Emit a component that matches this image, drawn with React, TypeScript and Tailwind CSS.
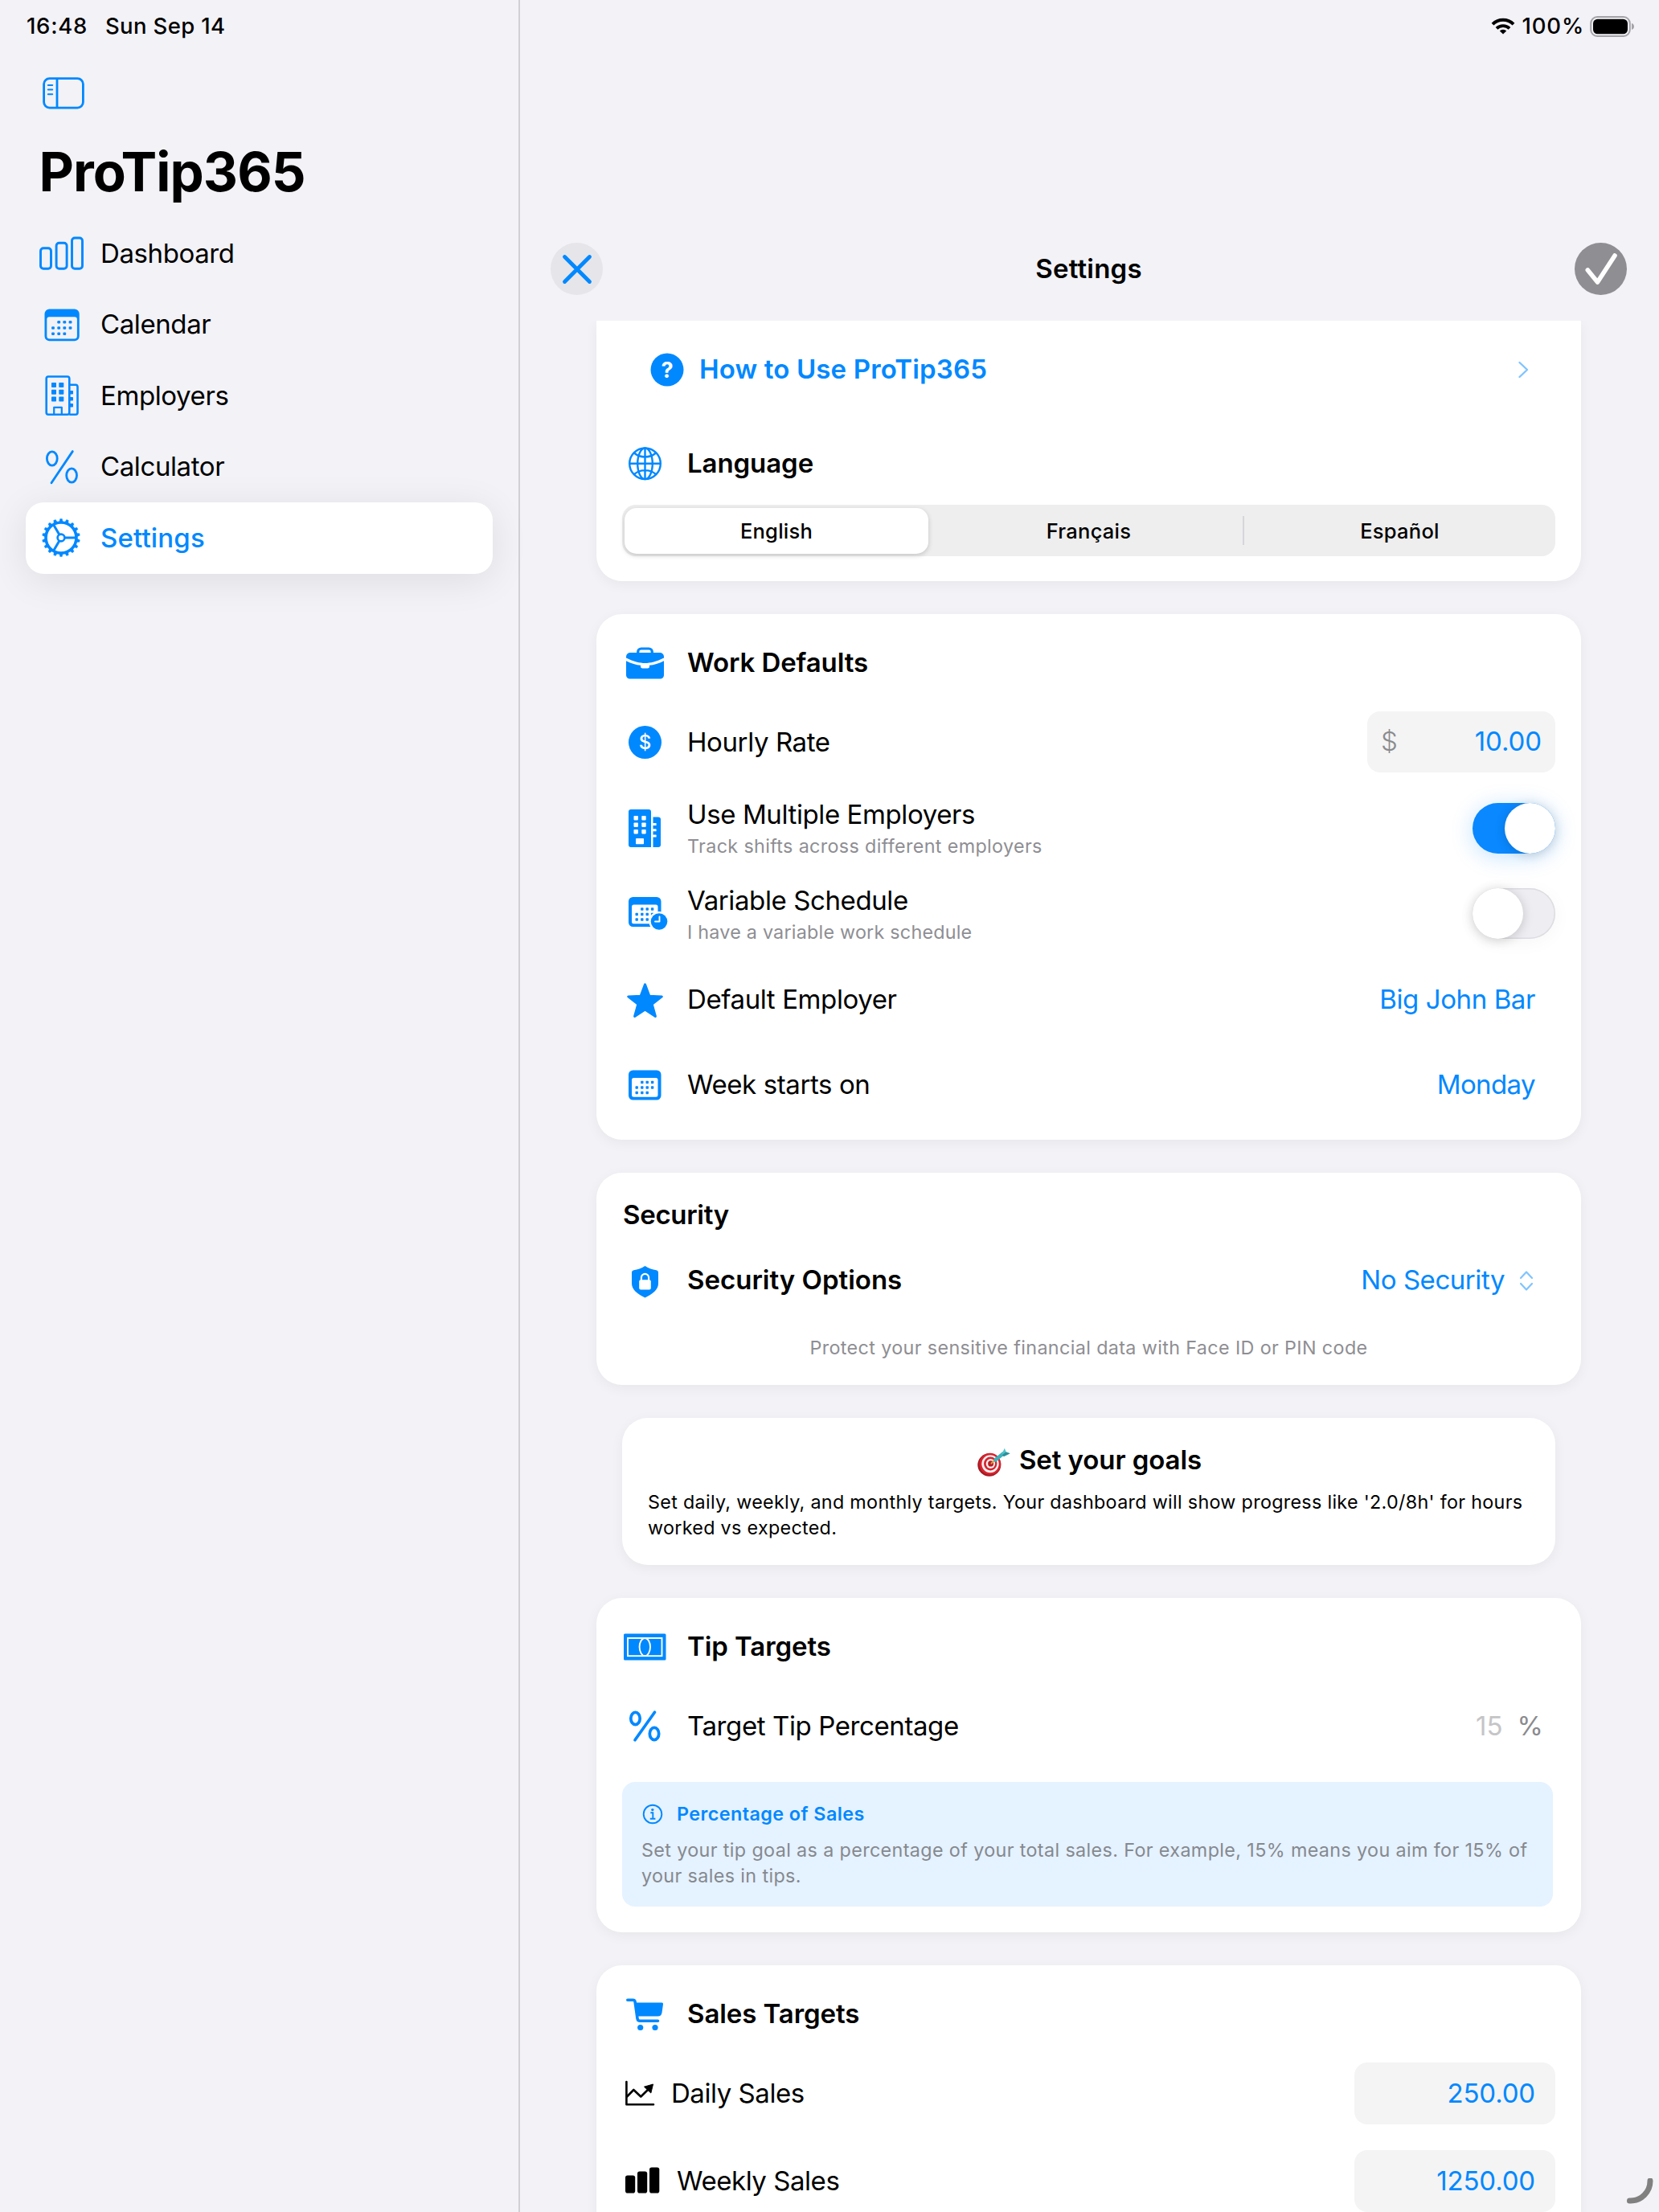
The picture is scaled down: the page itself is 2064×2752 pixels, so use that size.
import type { ReactNode } from "react";

const BLUE = "#0088ff";

/* ---------- shared pieces ---------- */

function Glyph({ children, className = "" }: { children: ReactNode; className?: string }) {
  return (
    <svg viewBox="0 0 57 57" className={`size-[57px] shrink-0 overflow-visible ${className}`} fill={BLUE}>
      {children}
    </svg>
  );
}

function Card({ children, className }: { children: ReactNode; className: string }) {
  return (
    <section className={`shrink-0 bg-white px-8 shadow-[0_4px_16px_rgba(0,0,0,0.05)] ${className}`}>{children}</section>
  );
}

function Heading({ icon, children }: { icon: ReactNode; children: ReactNode }) {
  return (
    <div className="flex h-[121px] items-center gap-6">
      {icon}
      <h2 className="text-[33px] leading-[41px] font-semibold tracking-[-0.08px]">{children}</h2>
    </div>
  );
}

function Row({ icon, title, note, noteClass = "", children, className = "h-[106px]" }: {
  icon: ReactNode;
  title: string;
  note?: string;
  noteClass?: string;
  children: ReactNode;
  className?: string;
}) {
  return (
    <div className={`flex items-center gap-6 ${className}`}>
      {icon}
      <div className="grow">
        <div className="text-[33px] leading-[46px] tracking-[-0.4px]">{title}</div>
        {note && <div className={`text-[23.3px] leading-[34px] text-[#8e8e93] ${noteClass}`}>{note}</div>}
      </div>
      {children}
    </div>
  );
}

/* ---------- icons ---------- */

function CalendarBody({ top }: { top: number }) {
  const dots = [
    [24.8, 15], [31.2, 15], [37.6, 15],
    [18.2, 21.5], [24.8, 21.5], [31.2, 21.5], [37.6, 21.5],
    [18.2, 28], [24.8, 28], [31.2, 28],
  ];
  return (
    <g transform={`translate(0 ${top})`}>
      <path fillRule="evenodd" d="M13.5 0H43a5.5 5.5 0 0 1 5.5 5.5v26a5.5 5.5 0 0 1-5.5 5.5H13.5A5.5 5.5 0 0 1 8 31.5v-26A5.5 5.5 0 0 1 13.5 0ZM14.5 9.5a2.5 2.5 0 0 0-2.5 2.5v18.700a2.500 2.500 0 0 0 2.500 2.500H42a2.500 2.500 0 0 0 2.500-2.500V12a2.500 2.500 0 0 0-2.500-2.500Z" />
      {dots.map(([x, y]) => (
        <rect key={`${x}-${y}`} x={x - 1.7} y={y - 1.7} width="3.4" height="3.4" rx="0.8" />
      ))}
    </g>
  );
}

const SidebarToggle = () => (
  <svg viewBox="0 0 52 40" className="h-10 w-[52px]" fill="none" stroke={BLUE} strokeWidth="2.8">
    <rect x="1.6" y="1.6" width="48.8" height="36.5" rx="7" />
    <path d="M18 1.6V38" />
    <path d="M6.8 10h5.4M6.8 15.6h5.4M6.8 21.3h5.4" strokeWidth="2" strokeLinecap="round" />
  </svg>
);

const DashboardIcon = () => (
  <svg viewBox="0 0 64 64" className="size-16" fill="none" stroke={BLUE} strokeWidth="2.9">
    <rect x="6.5" y="25.8" width="13" height="25.5" rx="3.5" />
    <rect x="26.1" y="19.3" width="13" height="32" rx="3.5" />
    <rect x="45.5" y="13" width="13" height="38.3" rx="3.5" />
  </svg>
);

const NavCalendarIcon = () => {
  const dots = [
    [29.2, 28.7], [36.3, 28.7], [43.5, 28.7],
    [22, 36], [29.2, 36], [36.3, 36], [43.5, 36],
    [22, 43.2], [29.2, 43.2], [36.3, 43.2],
  ];
  return (
    <svg viewBox="0 0 64 64" className="size-16" fill={BLUE}>
      <path fillRule="evenodd" d="M17.5 12.5h31.200a6 6 0 0 1 6 6v27.700a6 6 0 0 1-6 6H17.500a6 6 0 0 1-6-6V18.500a6 6 0 0 1 6-6ZM17.300 22.300a3 3 0 0 0-3 3v20.600a3.500 3.500 0 0 0 3.500 3.500h30.600a3.500 3.500 0 0 0 3.500-3.500V25.300a3 3 0 0 0-3-3Z" />
      {dots.map(([x, y]) => (
        <rect key={`${x}-${y}`} x={x - 1.9} y={y - 1.7} width="3.8" height="3.4" rx="1.2" />
      ))}
    </svg>
  );
};

const EmployersIcon = () => (
  <svg viewBox="0 0 64 64" className="size-16" fill={BLUE}>
    <g fill="none" stroke={BLUE} strokeWidth="2.6">
      <rect x="13.7" y="8.5" width="28.6" height="47.3" rx="2.5" />
      <path d="M42.3 18.800h7.700a2.500 2.500 0 0 1 2.500 2.500v32a2.500 2.500 0 0 1-2.500 2.500h-7.700" />
      <path d="M23.2 55.800V46.800h9.600v9" strokeWidth="2.2" strokeLinejoin="round" />
    </g>
    {[16, 24.8, 33.6].map((y) => (
      <g key={y}>
        <rect x="20" y={y} width="6" height="6" rx="0.8" />
        <rect x="29.300" y={y} width="6" height="6" rx="0.8" />
      </g>
    ))}
    {[26, 34, 42].map((y) => (
      <rect key={y} x="42.3" y={y} width="4.7" height="4.6" rx="0.8" />
    ))}
  </svg>
);

const NavPercentIcon = () => (
  <svg viewBox="0 0 64 64" className="size-16" fill="none" stroke={BLUE} strokeWidth="2.8" strokeLinecap="round">
    <ellipse cx="20.8" cy="21.5" rx="6.4" ry="8.7" />
    <ellipse cx="45.1" cy="42.5" rx="6.4" ry="8.7" />
    <path d="M46.3 12.600 20 51.800" />
  </svg>
);

const GearIcon = () => (
  <svg viewBox="0 0 64 64" className="size-16" fill="none" stroke={BLUE}>
    <circle cx="32" cy="32" r="19" strokeWidth="3.6" />
    <circle cx="32" cy="32" r="4.4" strokeWidth="2.6" />
    {Array.from({ length: 18 }, (_, i) => (
      <path key={i} d="M50.5 29.6 55.400 30.700V33.300L50.500 34.400Z" fill={BLUE} strokeWidth="0.4" strokeLinejoin="round" transform={`rotate(${i * 20 + 10} 32 32)`} />
    ))}
    {[0, 120, 240].map((a) => (
      <path key={a} d="M36.5 32H50" strokeWidth="3" transform={`rotate(${a} 32 32)`} />
    ))}
  </svg>
);

const GlobeIcon = () => (
  <Glyph>
    <g fill="none" stroke={BLUE} strokeWidth="2.4">
      <circle cx="28.5" cy="28.8" r="19.3" />
      <ellipse cx="28.5" cy="28.8" rx="9.3" ry="19.3" />
      <path d="M28.5 9.500v38.600M9.200 28.800h38.600M15 15.500c7.500 6.600 19.500 6.600 27 0M15 42.100c7.500-6.600 19.500-6.600 27 0" />
    </g>
  </Glyph>
);

const BriefcaseIcon = () => (
  <Glyph>
    <path d="M5 22.500V21a5 5 0 0 1 5-5h37a5 5 0 0 1 5 5v1.500C43 27 35 29 28.500 29S14 27 5 22.500Z" />
    <path d="M5 26.200c6.500 3.300 12.500 5 18 5.600v1.500a2.300 2.300 0 0 0 2.300 2.300h6.400a2.300 2.300 0 0 0 2.300-2.300v-1.500c5.500-.6 11.500-2.300 18-5.600V44a4.500 4.500 0 0 1-4.500 4.500h-38A4.500 4.500 0 0 1 5 44Z" />
    <path d="M19.700 17v-2a4 4 0 0 1 4-4h9.600a4 4 0 0 1 4 4v2" fill="none" stroke={BLUE} strokeWidth="3.2" />
  </Glyph>
);

const DollarIcon = () => (
  <Glyph>
    <circle cx="28.5" cy="28.5" r="20.5" />
    <text x="28.5" y="37" fill="white" fontSize="24" fontWeight="500" textAnchor="middle">$</text>
  </Glyph>
);

const BuildingsIcon = () => (
  <Glyph>
    <path d="M11 5h22a3 3 0 0 1 3 3v44H11a3 3 0 0 1-3-3V8a3 3 0 0 1 3-3ZM38.500 14.500H45a3 3 0 0 1 3 3V49a3 3 0 0 1-3 3h-6.500Z" />
    <g fill="white">
      {[13, 21.5, 30].map((y) => (
        <g key={y}>
          <rect x="14.5" y={y} width="5.4" height="5.4" rx="0.8" />
          <rect x="24.3" y={y} width="5.4" height="5.4" rx="0.8" />
        </g>
      ))}
      <rect x="17" y="41" width="10" height="7.2" rx="0.8" />
      {[22, 29.3, 36.6].map((y) => (
        <rect key={y} x="38" y={y} width="4.6" height="3" rx="0.6" />
      ))}
    </g>
  </Glyph>
);

const CalendarClockIcon = () => (
  <Glyph>
    <CalendarBody top={8} />
    <circle cx="46" cy="38.5" r="12.6" fill="white" />
    <circle cx="46" cy="38.5" r="10.3" />
    <path d="M46.5 32.500v6h-5.500" fill="none" stroke="white" strokeWidth="1.9" strokeLinecap="round" strokeLinejoin="round" />
  </Glyph>
);

const StarIcon = () => (
  <Glyph>
    <path
      d="M28.5 9.800 33.900 24.300 49.300 24.900 37.200 34.300 41.400 49.500 28.500 41 15.600 49.500 19.800 34.300 7.700 24.900 23.100 24.300Z"
      stroke={BLUE}
      strokeWidth="3"
      strokeLinejoin="round"
    />
  </Glyph>
);

const CalendarIcon = () => (
  <Glyph>
    <CalendarBody top={10.5} />
  </Glyph>
);

const ShieldIcon = () => (
  <Glyph>
    <path d="M28.5 10c4.500 3 9 4.300 14 5.300 1.700.4 2.500 1.500 2.500 3.200v13.500c0 7.500-7.500 13-16.500 17.500-9-4.500-16.500-10-16.500-17.500V18.500c0-1.700.8-2.800 2.500-3.200 5-1 9.500-2.300 14-5.300Z" />
    <rect x="21.2" y="27.3" width="14.6" height="12.2" rx="2" fill="white" />
    <path d="M23.9 28v-3.500a4.600 4.600 0 0 1 9.200 0V28" fill="none" stroke="white" strokeWidth="2.2" />
  </Glyph>
);

const BanknoteIcon = () => (
  <Glyph>
    <rect x="2" y="12.5" width="52.5" height="33" rx="1.5" />
    <g fill="none" stroke="white" strokeWidth="1.9">
      <rect x="7" y="18" width="42.5" height="22.2" />
      <ellipse cx="28.3" cy="29.1" rx="6.7" ry="11" />
    </g>
  </Glyph>
);

const PercentIcon = () => (
  <Glyph>
    <g fill="none" stroke={BLUE} strokeWidth="3.700" strokeLinecap="round">
      <ellipse cx="16.5" cy="19" rx="5.700" ry="7.600" />
      <ellipse cx="40" cy="38" rx="5.700" ry="7.600" />
      <path d="M40.5 11.300 16 45.700" />
    </g>
  </Glyph>
);

const CartIcon = () => (
  <Glyph>
    <path d="M6.8 11.300h6.700q2.300 0 2.600 2.300l2.900 20.600q.5 3.100 3.300 3.100H44.500" fill="none" stroke={BLUE} strokeWidth="3.6" strokeLinecap="round" />
    <path d="M15.5 14.500H49.500q1.800 0 1.500 2l-1.500 10.500q-.7 4.500-5 4.500H18Z" />
    <circle cx="22.7" cy="45.5" r="3.6" />
    <circle cx="41" cy="45.5" r="3.6" />
  </Glyph>
);

const TrendIcon = () => (
  <Glyph>
    <g fill="none" stroke="black" strokeWidth="2.6" strokeLinecap="round" strokeLinejoin="round">
      <path d="M5.4 14v28.300H39" />
      <path d="M6 32.500 14.300 24l9 8.500L34 22" />
    </g>
    <path d="M38.5 17 27.500 20.200 35.800 28Z" fill="black" stroke="black" strokeLinejoin="round" />
  </Glyph>
);

const BarsIcon = () => (
  <Glyph>
    <g fill="black">
      <rect x="4" y="21.5" width="12.2" height="22" rx="2.8" />
      <rect x="19" y="16.5" width="12.2" height="27" rx="2.8" />
      <rect x="34" y="11.5" width="12.3" height="32" rx="2.8" />
    </g>
  </Glyph>
);

const TargetIcon = () => (
  <svg viewBox="0 0 41 36" className="h-9 w-[41px]">
    <ellipse cx="14.8" cy="21.5" rx="14.5" ry="14.3" fill="#a31a22" />
    <ellipse cx="15.8" cy="20.3" rx="13.4" ry="13.5" fill="#d8232e" />
    <ellipse cx="16" cy="20.2" rx="10.7" ry="11" fill="#f4f1f1" />
    <ellipse cx="16.2" cy="20.1" rx="8.2" ry="8.5" fill="#d8232e" />
    <ellipse cx="16.4" cy="20" rx="5.7" ry="5.9" fill="#f4f1f1" />
    <ellipse cx="16.6" cy="19.9" rx="3.5" ry="3.7" fill="#b81d26" />
    <path d="M17.5 19.500 23.500 14" stroke="#d9a441" strokeWidth="2" strokeLinecap="round" />
    <path d="M22.5 15.300 32 7.500" stroke="#3bb3bd" strokeWidth="4.5" strokeLinecap="round" />
    <path d="M30 9 33.800.8 35.600 5.300 40.600 7.300 33 11Z" fill="#4fc3cb" />
    <path d="M30.5 9.300 35.500 5.400 40.600 7.300 33 11Z" fill="#2e8f9b" />
  </svg>
);

/* ---------- sidebar ---------- */

const nav = [
  { label: "Dashboard", icon: <DashboardIcon /> },
  { label: "Calendar", icon: <NavCalendarIcon /> },
  { label: "Employers", icon: <EmployersIcon /> },
  { label: "Calculator", icon: <NavPercentIcon /> },
  { label: "Settings", icon: <GearIcon />, active: true },
];

function Sidebar() {
  return (
    <aside className="flex w-[647px] shrink-0 flex-col border-r-2 border-[#d0d0d5]">
      <div className="flex h-[65px] items-center gap-[22px] pl-[33px] text-[27.5px] font-medium tracking-[0.35px]">
        <span className="tracking-[0.7px]">16:48</span>
        <span>Sun Sep 14</span>
      </div>
      <div className="mt-[31px] pl-[53px]">
        <SidebarToggle />
      </div>
      <h1 className="mt-[33px] pl-[48.5px] text-[67px] leading-[90px] font-bold tracking-[-0.95px]">ProTip365</h1>
      <nav className="mt-3 pr-[32px] pl-8">
        {nav.map(({ label, icon, active }) => (
          <div
            key={label}
            className={
              active
                ? "flex h-[88.5px] items-center gap-[17px] rounded-[22px] bg-white pl-3 text-[33px] font-medium tracking-[0.15px] text-[#0088ff] shadow-[0_8px_48px_rgba(0,0,0,0.09)]"
                : "flex h-[88.5px] items-center gap-[17px] pl-3 text-[33px] tracking-[-0.4px]"
            }
          >
            {icon}
            <span>{label}</span>
          </div>
        ))}
      </nav>
    </aside>
  );
}

/* ---------- top bars ---------- */

function StatusRight() {
  return (
    <div className="flex h-[65px] shrink-0 items-center justify-end pr-[30px]">
      <svg viewBox="0 0 30 21" className="mr-[9px] h-[21px] w-[30px]" fill="none" stroke="black">
        <path d="M2 8.200a18.500 18.500 0 0 1 26 0" strokeWidth="4" />
        <path d="M7 13.300a11.500 11.500 0 0 1 16 0" strokeWidth="3.8" />
        <path d="M15 20.500 10.800 16.400a6 6 0 0 1 8.400 0Z" fill="black" stroke="none" />
      </svg>
      <span className="text-[27.5px] font-medium tracking-[0.8px]">100%</span>
      <svg viewBox="0 0 56 28" className="ml-[7px] h-7 w-14">
        <rect x="1.2" y="2" width="48.6" height="24" rx="8" fill="none" stroke="#a3a3a8" strokeWidth="2" />
        <rect x="4" y="4.7" width="43" height="18.6" rx="5.5" fill="black" />
        <path d="M52 10c2 .6 3 2.200 3 4s-1 3.400-3 4Z" fill="#a3a3a8" />
      </svg>
    </div>
  );
}

function TitleBar() {
  return (
    <header className="mt-[237px] flex h-[65px] shrink-0 items-center justify-between pr-10 pl-[38px]">
      <button className="flex size-[65px] items-center justify-center rounded-full bg-[#e5e5ea]">
        <svg viewBox="0 0 40 40" className="size-10" stroke={BLUE} strokeWidth="4.8" strokeLinecap="round">
          <path d="M4.5 4.500 35.500 35.500M35.500 4.500 4.500 35.500" />
        </svg>
      </button>
      <h2 className="text-[33px] font-semibold tracking-[0.2px]">Settings</h2>
      <button className="flex size-[65px] items-center justify-center rounded-full bg-[#8e8e93]">
        <svg viewBox="0 0 65 65" className="size-[65px]" fill="none" stroke="white" strokeWidth="5.6" strokeLinecap="round" strokeLinejoin="round">
          <path d="M16.3 34 28.500 49 50 16" />
        </svg>
      </button>
    </header>
  );
}

/* ---------- cards ---------- */

function LanguageCard() {
  return (
    <Card className="h-[324px] rounded-b-[32px]">
      <div className="flex h-[122px] items-center pr-[32px] pl-[33px]">
        <svg viewBox="0 0 46 46" className="size-[46px]">
          <circle cx="23" cy="23" r="20.5" fill={BLUE} />
          <text x="23" y="32.8" fill="white" fontSize="27" fontWeight="700" textAnchor="middle">?</text>
        </svg>
        <span className="ml-[17px] grow text-[33px] font-semibold tracking-[0.14px] text-[#0088ff]">How to Use ProTip365</span>
        <svg viewBox="0 0 16 24" className="h-6 w-4" fill="none" stroke="#80c4ff" strokeWidth="2.4" strokeLinecap="round" strokeLinejoin="round">
          <path d="M3.5 3 13 12l-9.500 9" />
        </svg>
      </div>
      <div className="mt-6 flex h-[63px] items-center gap-6">
        <GlobeIcon />
        <h2 className="text-[33px] font-semibold tracking-[-0.08px]">Language</h2>
      </div>
      <div className="mt-5 flex h-16 items-center rounded-[17px] bg-[#eeeeef] text-[25.5px] leading-[33px] font-medium tracking-[0.25px]">
        <div className="ml-[3px] flex h-[57px] w-[378px] items-center justify-center rounded-[15px] bg-white shadow-[0_2px_6px_rgba(0,0,0,0.18)]">
          <span className="pt-px">English</span>
        </div>
        <div className="grow pt-px pl-2 text-center">Français</div>
        <div className="h-9 w-0.5 bg-[#d6d6d8]" />
        <div className="w-[387px] pt-px text-center">Español</div>
      </div>
    </Card>
  );
}

function WorkCard() {
  return (
    <Card className="h-[654px] rounded-[32px]">
      <Heading icon={<BriefcaseIcon />}>Work Defaults</Heading>
      <Row icon={<DollarIcon />} title="Hourly Rate" className="h-[76px]">
        <div className="flex h-[76px] w-[234px] items-center justify-between rounded-[16px] bg-[#f4f4f4] px-[17px] text-[33px] tracking-[-0.1px]">
          <span className="font-light text-[#8a8a8e]">$</span>
          <span className="text-[#0088ff]">10.00</span>
        </div>
      </Row>
      <Row
        icon={<BuildingsIcon />}
        title="Use Multiple Employers"
        note="Track shifts across different employers"
        noteClass="tracking-[0.36px]"
        className="mt-4 h-[106px]"
      >
        <div className="flex h-[63px] w-[103px] justify-end rounded-full bg-[#0a88ff] shadow-[0_4px_28px_rgba(0,136,255,0.24)]">
          <div className="size-[63px] rounded-full bg-white shadow-[0_2px_14px_rgba(0,0,0,0.16)]" />
        </div>
      </Row>
      <Row
        icon={<CalendarClockIcon />}
        title="Variable Schedule"
        note="I have a variable work schedule"
        noteClass="tracking-[0.24px]"
        className="h-[107px]"
      >
        <div className="flex h-[63px] w-[103px] rounded-full bg-[#ededf2] shadow-[inset_0_0_0_1.5px_#dcdce1,0_4px_24px_rgba(0,0,0,0.04)]">
          <div className="size-[63px] rounded-full bg-white shadow-[0_2px_14px_rgba(0,0,0,0.18)]" />
        </div>
      </Row>
      <Row icon={<StarIcon />} title="Default Employer">
        <span className="pr-[25px] text-[33px] leading-[46px] tracking-[-0.4px] text-[#0088ff]">Big John Bar</span>
      </Row>
      <Row icon={<CalendarIcon />} title="Week starts on">
        <span className="pr-[25px] text-[33px] leading-[46px] tracking-[-0.6px] text-[#0088ff]">Monday</span>
      </Row>
    </Card>
  );
}

function SecurityCard() {
  return (
    <Card className="h-[264px] rounded-[32px] pt-8">
      <h2 className="pl-px text-[33px] leading-10 font-semibold tracking-[-0.3px]">Security</h2>
      <div className="mt-[24px] flex h-[76px] items-center gap-6">
        <ShieldIcon />
        <span className="grow text-[33px] font-semibold">Security Options</span>
        <span className="text-[33px] tracking-[-0.45px] text-[#0088ff]">No Security</span>
        <svg viewBox="0 0 20 28" className="mr-[26px] -ml-[7px] h-7 w-5" fill="none" stroke="#80c4ff" strokeWidth="2.2" strokeLinecap="round" strokeLinejoin="round">
          <path d="M3 11 10 3.500 17 11M3 18l7 7.500 7-7.500" />
        </svg>
      </div>
      <p className="mt-[30px] text-center text-[23.3px] leading-8 tracking-[0.38px] text-[#8e8e93]">
        Protect your sensitive financial data with Face ID or PIN code
      </p>
    </Card>
  );
}

function GoalsCard() {
  return (
    <Card className="mx-8 h-[183px] rounded-[32px] pt-8">
      <div className="flex h-[41px] items-center justify-center gap-[11px] pl-0.5">
        <div className="pt-1">
          <TargetIcon />
        </div>
        <h2 className="text-[33px] font-semibold tracking-[-0.08px]">Set your goals</h2>
      </div>
      <p className="mt-4 text-[23.3px] leading-[32.4px] tracking-[0.315px] whitespace-nowrap">
        Set daily, weekly, and monthly targets. Your dashboard will show progress like '2.0/8h' for hours
        <br />
        worked vs expected.
      </p>
    </Card>
  );
}

function TipCard() {
  return (
    <Card className="h-[416px] rounded-[32px]">
      <Heading icon={<BanknoteIcon />}>Tip Targets</Heading>
      <Row icon={<PercentIcon />} title="Target Tip Percentage" className="h-[76px]">
        <div className="flex items-center gap-[18px] pr-[15px] text-[33px] leading-[46px]">
          <span className="text-[#c5c5c7]">15</span>
          <span className="text-[#8a8a8e]">%</span>
        </div>
      </Row>
      <div className="mt-8 mr-[3px] h-[155px] rounded-[16px] bg-[#e5f2ff] px-6 pt-6">
        <div className="flex h-8 items-center gap-[17px] pl-px">
          <svg viewBox="0 0 26 26" className="size-[26px]" fill="none" stroke={BLUE} strokeWidth="1.9">
            <circle cx="13" cy="13" r="11.3" />
            <circle cx="12.8" cy="7.6" r="1.7" fill={BLUE} stroke="none" />
            <path d="M10.3 11.300h3v7.200M9.800 18.800h6.600" />
          </svg>
          <span className="text-[23.3px] font-semibold tracking-[0.45px] text-[#0088ff]">Percentage of Sales</span>
        </div>
        <p className="mt-[12.5px] text-[23.3px] leading-[32.4px] tracking-[0.38px] whitespace-nowrap text-[#85898f]">
          Set your tip goal as a percentage of your total sales. For example, 15% means you aim for 15% of
          <br />
          your sales in tips.
        </p>
      </div>
    </Card>
  );
}

const sales = [
  { icon: <TrendIcon />, label: "Daily Sales", labelClass: "ml-1", value: "250.00" },
  { icon: <BarsIcon />, label: "Weekly Sales", labelClass: "ml-[11px]", value: "1250.00" },
];

function SalesCard() {
  return (
    <Card className="h-[600px] rounded-t-[32px]">
      <Heading icon={<CartIcon />}>Sales Targets</Heading>
      <div className="flex flex-col gap-8">
        {sales.map(({ icon, label, labelClass, value }) => (
          <div key={label} className="flex h-[77px] items-center">
            {icon}
            <span className={`grow text-[33px] leading-[41px] tracking-[-0.45px] ${labelClass}`}>{label}</span>
            <div className="flex h-full w-[250px] items-center justify-end rounded-[16px] bg-[#f4f4f4] pr-[25px] text-[33px] leading-[41px] tracking-[-0.15px] text-[#0088ff]">
              {value}
            </div>
          </div>
        ))}
      </div>
    </Card>
  );
}

export default function App() {
  return (
    <div className="relative flex h-[2752px] w-[2064px] overflow-hidden bg-[#f2f2f7] font-[Inter,sans-serif] text-black">
      <Sidebar />
      <main className="flex min-w-0 grow flex-col">
        <StatusRight />
        <TitleBar />
        <div className="mt-8 flex min-h-0 grow flex-col gap-[41px] overflow-hidden pr-[97px] pl-[95px]">
          <LanguageCard />
          <WorkCard />
          <SecurityCard />
          <GoalsCard />
          <TipCard />
          <SalesCard />
        </div>
      </main>
      <svg viewBox="0 0 36 36" className="absolute right-[6px] bottom-[6px] size-9" fill="none" stroke="#808080" strokeWidth="7" strokeLinecap="round">
        <path d="M31 3A24.500 24.500 0 0 1 5.500 28" />
      </svg>
    </div>
  );
}
